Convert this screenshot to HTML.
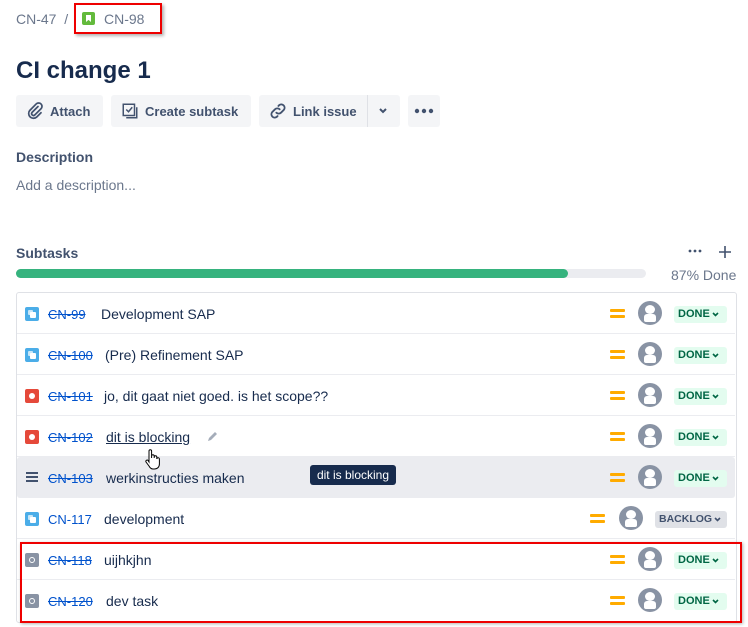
<!DOCTYPE html>
<html><head><style>
*{margin:0;padding:0;box-sizing:border-box}
body{width:748px;height:627px;background:#fff;font-family:"Liberation Sans",sans-serif;color:#172b4d;position:relative;overflow:hidden}
.a{position:absolute;white-space:nowrap}
.btn{position:absolute;top:95px;height:32px;background:#f4f5f7;border-radius:3px;font-size:13px;font-weight:bold;color:#42526e;display:flex;align-items:center;white-space:nowrap}
.row{position:absolute;left:17px;width:718px;height:41px;border-bottom:1px solid #ebecf0}
.ic{position:absolute;left:8px;top:14px;width:14px;height:14px;border-radius:2px}
.key{position:absolute;left:31px;top:14px;font-size:13px;color:#0052cc;text-decoration:line-through}
.txt{position:absolute;top:13px;font-size:14px;color:#172b4d}
.pri{position:absolute;top:15px;width:15px;height:11px}
.pri:before,.pri:after{content:"";position:absolute;left:0;width:15px;height:3px;background:#ffab00;border-radius:1px}
.pri:before{top:1px}.pri:after{top:7px}
.av{position:absolute;top:8px;width:24px;height:24px;border-radius:50%;background:#8993a4;overflow:hidden}
.av:before{content:"";position:absolute;left:7px;top:4px;width:10px;height:9px;border-radius:50%;background:#fff}
.av:after{content:"";position:absolute;left:6px;top:13px;width:12px;height:8px;border-radius:3px 3px 2px 2px;background:#fff}
.loz{position:absolute;top:13px;height:17px;border-radius:3px;font-size:11px;font-weight:bold;padding:2px 4px;line-height:13px;white-space:nowrap}
.loz svg{margin-left:2px;vertical-align:0}
.done{left:657px;width:53px;background:#e3fcef;color:#006644}
.bl{left:638px;width:72px;background:#dfe1e6;color:#42526e;font-size:10.5px}
.sub{background:#4bade8}.sub:before{content:"";position:absolute;left:3px;top:3px;width:5px;height:5px;background:#fff;opacity:.7;border-radius:1px}.sub:after{content:"";position:absolute;left:5px;top:5px;width:6px;height:6px;background:#fff;border-radius:1px}
.bug{background:#e5493a}.bug:before{content:"";position:absolute;left:4px;top:4px;width:6px;height:6px;border-radius:50%;background:#fff}
.gr{background:#8993a4}.gr:before{content:"";position:absolute;left:4px;top:4px;width:4px;height:4px;border:1px solid #fff;border-radius:50%}
</style></head><body>
<div class="a" style="left:16px;top:11px;font-size:14px;color:#6b778c">CN-47 &nbsp;/</div>
<div class="a" style="left:74px;top:3px;width:88px;height:31px;border:2px solid #e00;box-shadow:2px 2px 3px rgba(0,0,0,.3)"></div>
<div class="a" style="left:82px;top:12px;width:13px;height:13px;background:#63ba3c;border-radius:2px"><div style="position:absolute;left:4px;top:3px;width:5px;height:7px;background:#fff;clip-path:polygon(0 0,100% 0,100% 100%,50% 70%,0 100%)"></div></div>
<div class="a" style="left:104px;top:11px;font-size:14px;color:#6b778c">CN-98</div>
<div class="a" style="left:16px;top:57px;font-size:24px;font-weight:bold;color:#172b4d">CI change 1</div>
<div class="btn" style="left:16px;width:87px"><svg style="margin-left:10px" width="18" height="18" viewBox="0 0 24 24"><path d="M16 6l-8 8a2.5 2.5 0 0 0 3.5 3.5l8.5-8.5a4.5 4.5 0 0 0-6.4-6.4L5 11.3a6.4 6.4 0 0 0 9 9l6-6" fill="none" stroke="#42526e" stroke-width="2.3" stroke-linecap="round"/></svg><span style="margin-left:6px">Attach</span></div>
<div class="btn" style="left:111px;width:140px"><svg style="margin-left:10px" width="18" height="18" viewBox="0 0 24 24"><rect x="3" y="3" width="15" height="15" fill="none" stroke="#42526e" stroke-width="2"/><path d="M7 10l3 3 5-6M21 7v14H7" fill="none" stroke="#42526e" stroke-width="2"/></svg><span style="margin-left:6px">Create subtask</span></div>
<div class="btn" style="left:259px;width:141px"><svg style="margin-left:9px" width="20" height="20" viewBox="0 0 24 24"><path d="M10 14a4 4 0 0 0 5.6 0l3.5-3.5a4 4 0 0 0-5.6-5.6l-1 1M14 10a4 4 0 0 0-5.6 0l-3.5 3.5a4 4 0 0 0 5.6 5.6l1-1" fill="none" stroke="#42526e" stroke-width="2.2" stroke-linecap="round"/></svg><span style="margin-left:5px">Link issue</span><div style="position:absolute;left:108px;top:0;width:1px;height:32px;background:#dfe1e6"></div><svg style="position:absolute;left:119px;top:12px" width="10" height="8" viewBox="0 0 10 8"><path d="M2 2l3 3 3-3" fill="none" stroke="#42526e" stroke-width="2"/></svg></div>
<div class="btn" style="left:408px;width:32px;justify-content:center"><svg width="20" height="6" viewBox="0 0 20 6"><circle cx="3" cy="3" r="2.2" fill="#42526e"/><circle cx="10" cy="3" r="2.2" fill="#42526e"/><circle cx="17" cy="3" r="2.2" fill="#42526e"/></svg></div>
<div class="a" style="left:16px;top:149px;font-size:14px;font-weight:bold;color:#42526e">Description</div>
<div class="a" style="left:16px;top:177px;font-size:14px;color:#6b778c">Add a description...</div>
<div class="a" style="left:16px;top:245px;font-size:14px;font-weight:bold;color:#42526e">Subtasks</div>
<svg class="a" style="left:688px;top:249px" width="14" height="4" viewBox="0 0 14 4"><circle cx="2" cy="2" r="1.4" fill="#42526e"/><circle cx="7" cy="2" r="1.4" fill="#42526e"/><circle cx="12" cy="2" r="1.4" fill="#42526e"/></svg>
<svg class="a" style="left:718px;top:245px" width="14" height="14" viewBox="0 0 14 14"><path d="M7 1v12M1 7h12" stroke="#42526e" stroke-width="1.6"/></svg>
<div class="a" style="left:16px;top:269px;width:630px;height:9px;border-radius:5px;background:#ebecf0"><div style="width:552px;height:9px;border-radius:5px;background:#36b37e"></div></div>
<div class="a" style="left:671px;top:267px;font-size:14px;color:#6b778c">87% Done</div>
<div class="a" style="left:16px;top:292px;width:721px;height:331px;border:1px solid #dfe1e6;border-radius:3px"></div>

<div class="row" style="top:293px"><div class="ic sub"></div><div class="key">CN-99</div><div class="txt" style="left:84px">Development SAP</div><div class="pri" style="left:593px"></div><div class="av" style="left:621px"></div><div class="loz done">DONE<svg width="7" height="5" viewBox="0 0 7 5"><path d="M1 1l2.5 2.5L6 1" fill="none" stroke="#006644" stroke-width="1.6"/></svg></div></div>
<div class="row" style="top:334px"><div class="ic sub"></div><div class="key">CN-100</div><div class="txt" style="left:88px">(Pre) Refinement SAP</div><div class="pri" style="left:593px"></div><div class="av" style="left:621px"></div><div class="loz done">DONE<svg width="7" height="5" viewBox="0 0 7 5"><path d="M1 1l2.5 2.5L6 1" fill="none" stroke="#006644" stroke-width="1.6"/></svg></div></div>
<div class="row" style="top:375px"><div class="ic bug"></div><div class="key">CN-101</div><div class="txt" style="left:87px">jo, dit gaat niet goed. is het scope??</div><div class="pri" style="left:593px"></div><div class="av" style="left:621px"></div><div class="loz done">DONE<svg width="7" height="5" viewBox="0 0 7 5"><path d="M1 1l2.5 2.5L6 1" fill="none" stroke="#006644" stroke-width="1.6"/></svg></div></div>
<div class="row" style="top:416px"><div class="ic bug"></div><div class="key">CN-102</div><div class="txt" style="left:89px;text-decoration:underline">dit is blocking</div><svg class="a" style="left:189px;top:15px" width="12" height="12" viewBox="0 0 12 12"><path d="M2 10l1-3 6-6 2 2-6 6z" fill="#a5adba"/></svg><div class="pri" style="left:593px"></div><div class="av" style="left:621px"></div><div class="loz done">DONE<svg width="7" height="5" viewBox="0 0 7 5"><path d="M1 1l2.5 2.5L6 1" fill="none" stroke="#006644" stroke-width="1.6"/></svg></div></div>
<div class="row" style="top:457px;background:#ebecf0;border-radius:3px"><div class="a" style="left:9px;top:15px;width:12px;height:10px;border-top:2px solid #42526e;border-bottom:2px solid #42526e"><div style="margin-top:2px;height:2px;background:#42526e"></div></div><div class="key">CN-103</div><div class="txt" style="left:89px">werkinstructies maken</div><div class="pri" style="left:593px"></div><div class="av" style="left:621px"></div><div class="loz done">DONE<svg width="7" height="5" viewBox="0 0 7 5"><path d="M1 1l2.5 2.5L6 1" fill="none" stroke="#006644" stroke-width="1.6"/></svg></div></div>
<div class="row" style="top:498px"><div class="ic sub"></div><div class="key" style="text-decoration:none">CN-117</div><div class="txt" style="left:87px">development</div><div class="pri" style="left:573px"></div><div class="av" style="left:602px"></div><div class="loz bl">BACKLOG<svg width="7" height="5" viewBox="0 0 7 5"><path d="M1 1l2.5 2.5L6 1" fill="none" stroke="#42526e" stroke-width="1.6"/></svg></div></div>
<div class="row" style="top:539px"><div class="ic gr"></div><div class="key">CN-118</div><div class="txt" style="left:87px">uijhkjhn</div><div class="pri" style="left:593px"></div><div class="av" style="left:621px"></div><div class="loz done">DONE<svg width="7" height="5" viewBox="0 0 7 5"><path d="M1 1l2.5 2.5L6 1" fill="none" stroke="#006644" stroke-width="1.6"/></svg></div></div>
<div class="row" style="top:580px;border-bottom:none"><div class="ic gr"></div><div class="key">CN-120</div><div class="txt" style="left:89px">dev task</div><div class="pri" style="left:593px"></div><div class="av" style="left:621px"></div><div class="loz done">DONE<svg width="7" height="5" viewBox="0 0 7 5"><path d="M1 1l2.5 2.5L6 1" fill="none" stroke="#006644" stroke-width="1.6"/></svg></div></div>

<div class="a" style="left:310px;top:465px;width:86px;height:20px;background:#172b4d;border-radius:3px;color:#fff;font-size:12px;line-height:20px;text-align:center">dit is blocking</div>
<svg class="a" style="left:144px;top:448px" width="18" height="22" viewBox="0 0 18 22"><path d="M5 12V3a1.3 1.3 0 0 1 2.6 0v7V8a1.3 1.3 0 0 1 2.6 0v2-1a1.3 1.3 0 0 1 2.6 0v2a1.3 1.3 0 0 1 2.6 0v5c0 3-2 5-5 5H9c-2 0-3-1-4-3l-3-4a1.3 1.3 0 0 1 2-1.6L5 14z" fill="#fff" stroke="#000" stroke-width="1"/></svg>
<div class="a" style="left:20px;top:542px;width:722px;height:81px;border:2px solid #e00;box-shadow:1px 1px 3px rgba(0,0,0,.3)"></div>
</body></html>
